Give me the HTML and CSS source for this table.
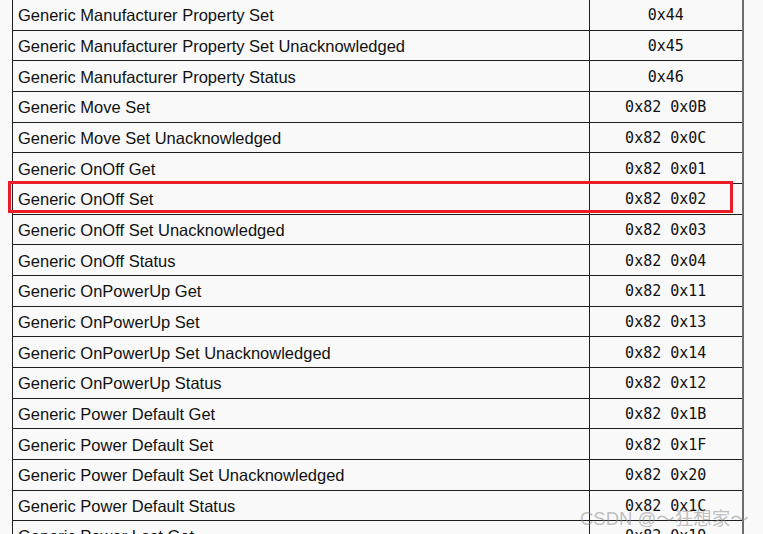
FILE: index.html
```html
<!DOCTYPE html>
<html>
<head>
<meta charset="utf-8">
<link rel="stylesheet" href="styles.css">
</head>
<body>
<div class="sheet">
  <table class="opcodes">
    <colgroup><col class="c-name"><col class="c-code"></colgroup>
    <tbody>
      <tr><td>Generic Manufacturer Property Set</td><td class="code">0x44</td></tr>
      <tr><td>Generic Manufacturer Property Set Unacknowledged</td><td class="code">0x45</td></tr>
      <tr><td>Generic Manufacturer Property Status</td><td class="code">0x46</td></tr>
      <tr><td>Generic Move Set</td><td class="code">0x82 0x0B</td></tr>
      <tr><td>Generic Move Set Unacknowledged</td><td class="code">0x82 0x0C</td></tr>
      <tr><td>Generic OnOff Get</td><td class="code">0x82 0x01</td></tr>
      <tr class="marked"><td>Generic OnOff Set</td><td class="code">0x82 0x02</td></tr>
      <tr><td>Generic OnOff Set Unacknowledged</td><td class="code">0x82 0x03</td></tr>
      <tr><td>Generic OnOff Status</td><td class="code">0x82 0x04</td></tr>
      <tr><td>Generic OnPowerUp Get</td><td class="code">0x82 0x11</td></tr>
      <tr><td>Generic OnPowerUp Set</td><td class="code">0x82 0x13</td></tr>
      <tr><td>Generic OnPowerUp Set Unacknowledged</td><td class="code">0x82 0x14</td></tr>
      <tr><td>Generic OnPowerUp Status</td><td class="code">0x82 0x12</td></tr>
      <tr><td>Generic Power Default Get</td><td class="code">0x82 0x1B</td></tr>
      <tr><td>Generic Power Default Set</td><td class="code">0x82 0x1F</td></tr>
      <tr><td>Generic Power Default Set Unacknowledged</td><td class="code">0x82 0x20</td></tr>
      <tr><td>Generic Power Default Status</td><td class="code">0x82 0x1C</td></tr>
      <tr><td>Generic Power Last Get</td><td class="code">0x82 0x19</td></tr>
    </tbody>
  </table>
  <div class="highlight"></div>
  <div class="watermark">CSDN @～狂想家～</div>
</div>
</body>
</html>
```
FILE: styles.css
```css
html, body {
  margin: 0;
  padding: 0;
  background: #f9f9f9;
  overflow: hidden;
}
body {
  width: 763px;
  height: 534px;
}
.sheet {
  position: relative;
  width: 763px;
  height: 534px;
  overflow: hidden;
}
.opcodes {
  margin: -1px 0 0 12px;
  border-collapse: collapse;
  table-layout: fixed;
  width: 730px;
  font-family: "Liberation Sans", Arial, sans-serif;
  font-size: 16.5px;
  color: #111;
  border-right: 2px solid #6e6e6e;
}
.c-name { width: 577px; }
.c-code { width: 153px; }
.opcodes td {
  height: 30.67px;
  padding: 1px 0 0 5px;
  border: 1px solid #1e1e1e;
  box-sizing: border-box;
  white-space: nowrap;
  line-height: 18px;
  vertical-align: middle;
}
.opcodes td.code {
  padding: 1px 0 0 0;
  text-align: center;
  font-family: "DejaVu Sans Mono", monospace;
  font-size: 15px;
  border-right: 2px solid #6e6e6e;
}
.highlight {
  position: absolute;
  left: 8px;
  top: 181px;
  width: 719px;
  height: 26px;
  border: 3px solid #ea1c27;
}
.watermark {
  position: absolute;
  left: 580px;
  top: 504px;
  font-family: "Liberation Sans", "Noto Sans CJK SC", sans-serif;
  font-size: 18.5px;
  color: rgba(140, 140, 140, 0.55);
  white-space: nowrap;
}
```
